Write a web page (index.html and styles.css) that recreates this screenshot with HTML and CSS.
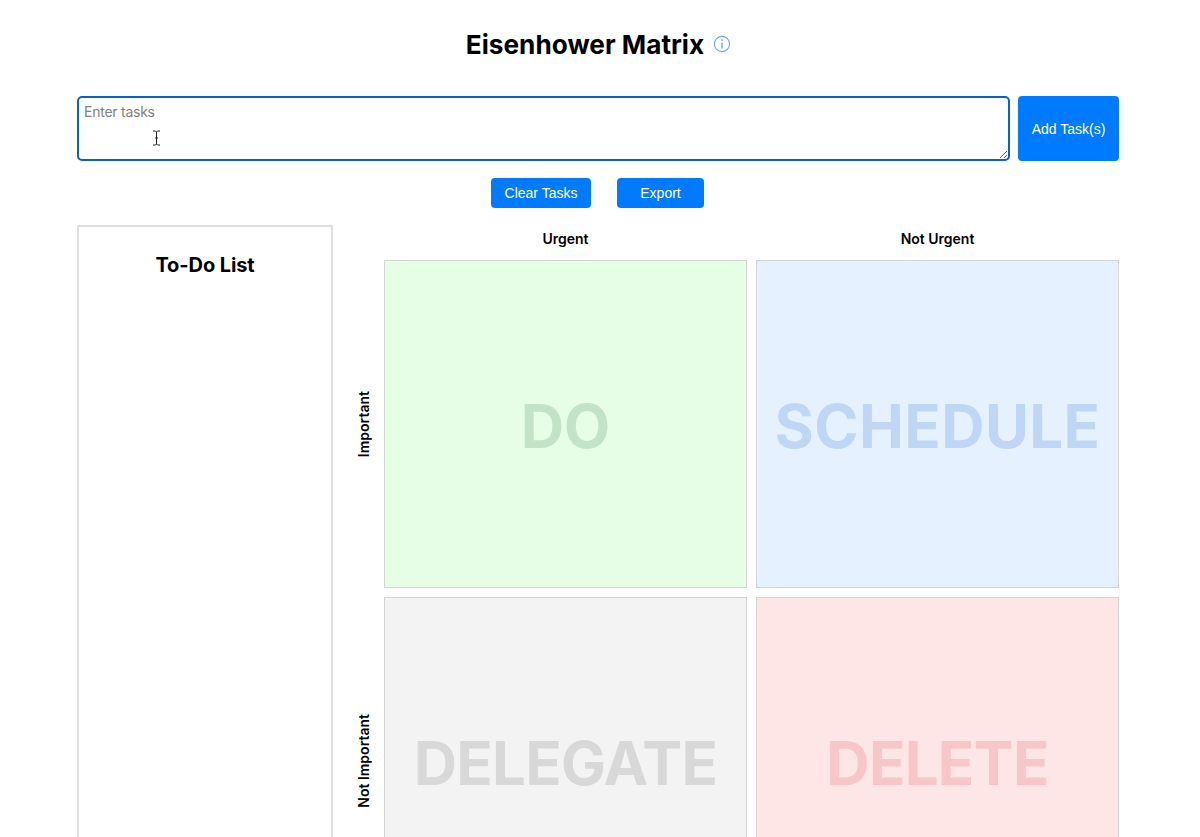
FILE: index.html
```html
<!DOCTYPE html>
<html lang="en">
<head>
    <meta charset="UTF-8">
    <meta name="viewport" content="width=device-width, initial-scale=1.0">
    <title>Eisenhower Matrix</title>
    <link rel="stylesheet" href="styles.css">
</head>
<body>
    <div class="container">
        <div class="title-row">
            <h1>Eisenhower Matrix</h1>
            <svg class="info-icon" width="18" height="18" viewBox="0 0 18 18" fill="none" stroke="#6aa6ea">
                <circle cx="9" cy="9" r="7.6" stroke-width="1.1"/>
                <path d="M9 7.6V13.4" stroke-width="1.4"/>
                <circle cx="9" cy="5.1" r="0.9" fill="#6aa6ea" stroke="none"/>
            </svg>
        </div>

        <div class="input-row">
            <textarea class="task-input" placeholder="Enter tasks"></textarea>
            <button class="btn btn-add">Add Task(s)</button>
        </div>

        <div class="actions">
            <button class="btn btn-clear">Clear Tasks</button>
            <button class="btn btn-export">Export</button>
        </div>

        <div class="board">
            <div class="todo">
                <h2>To-Do List</h2>
            </div>
            <div class="matrix">
                <div class="corner"></div>
                <div class="col-label">Urgent</div>
                <div class="col-label">Not Urgent</div>

                <div class="row-label"><span>Important</span></div>
                <div class="quadrant do"><span>DO</span></div>
                <div class="quadrant schedule"><span>SCHEDULE</span></div>

                <div class="row-label"><span>Not Important</span></div>
                <div class="quadrant delegate"><span>DELEGATE</span></div>
                <div class="quadrant delete"><span>DELETE</span></div>
            </div>
        </div>
    </div>

    <!-- mouse pointer caught in the screenshot -->
    <svg class="ibeam" width="9" height="16" viewBox="0 0 9 16" fill="none" stroke="#222" stroke-width="1">
        <path d="M1 1H3.5L4.5 2L5.5 1H8M4.5 2V14M1 15H3.5L4.5 14L5.5 15H8M3 8H6"/>
    </svg>
</body>
</html>
```

FILE: styles.css
```css
html {
    overflow: hidden;
}
body {
    font-family: Inter, 'Liberation Sans', Arial, sans-serif;
    margin: 0;
    background-color: white;
    color: black;
}
.container {
    width: 1042px;
    margin: 0 0 0 77px;
}
.title-row {
    display: flex;
    justify-content: center;
    align-items: center;
    gap: 9px;
    height: 96px;
    padding: 0 0 8px 1px;
    box-sizing: border-box;
}
h1 {
    font-size: 26.2px;
    font-weight: 700;
    margin: 0;
}
.input-row {
    display: flex;
    gap: 8px;
    height: 65px;
}
.task-input {
    flex: 1;
    box-sizing: border-box;
    border: 2px solid #0a62c9;
    border-radius: 5px;
    padding: 6px 5px;
    font-family: inherit;
    font-size: 14px;
    line-height: 16px;
    letter-spacing: -0.25px;
    outline: none;
    resize: both;
}
.task-input::placeholder {
    color: #808080;
}
.btn {
    background-color: #007bff;
    color: white;
    border: none;
    border-radius: 4px;
    font-family: 'Liberation Sans', Arial, sans-serif;
    font-size: 14px;
    cursor: pointer;
}
.btn-add {
    width: 101px;
}
.actions {
    display: flex;
    justify-content: center;
    gap: 26px;
    margin: 17px 0;
    padding-right: 1px;
}
.btn-clear, .btn-export {
    height: 30px;
    padding: 0;
}
.btn-clear {
    width: 100px;
}
.btn-export {
    width: 87px;
}
.board {
    display: flex;
}
.todo {
    width: 256px;
    height: 700px;
    box-sizing: border-box;
    border: 2px solid #dedede;
    flex-shrink: 0;
}
.todo h2 {
    font-size: 20px;
    font-weight: 700;
    letter-spacing: -0.1px;
    text-align: center;
    margin: 26px 0 0;
}
.matrix {
    flex: 1;
    margin-left: 19px;
    display: grid;
    grid-template-columns: 23px 1fr 1fr;
    grid-template-rows: 26px 328px 328px;
    gap: 9px;
}
.col-label {
    font-size: 14px;
    font-weight: 600;
    text-align: center;
    align-self: center;
}
.row-label {
    display: flex;
    align-items: center;
    justify-content: center;
    font-size: 14px;
    font-weight: 600;
}
.row-label span {
    writing-mode: vertical-rl;
    transform: rotate(180deg);
}
.quadrant {
    display: flex;
    align-items: center;
    justify-content: center;
    box-sizing: border-box;
    border: 1px solid #d4d4d4;
    padding-top: 4px;
    font-size: 60px;
    font-weight: 700;
}
.do {
    background-color: #e6fde6;
    color: #c3e3c6;
}
.schedule {
    background-color: #e5f1fe;
    color: #bfd7f4;
    letter-spacing: 0.4px;
}
.delegate {
    background-color: #f3f3f3;
    color: #d8d8d8;
    letter-spacing: -0.7px;
}
.delete {
    background-color: #fee6e6;
    color: #f6c6c8;
    letter-spacing: -0.7px;
}
.ibeam {
    position: absolute;
    left: 152px;
    top: 130px;
}
```
